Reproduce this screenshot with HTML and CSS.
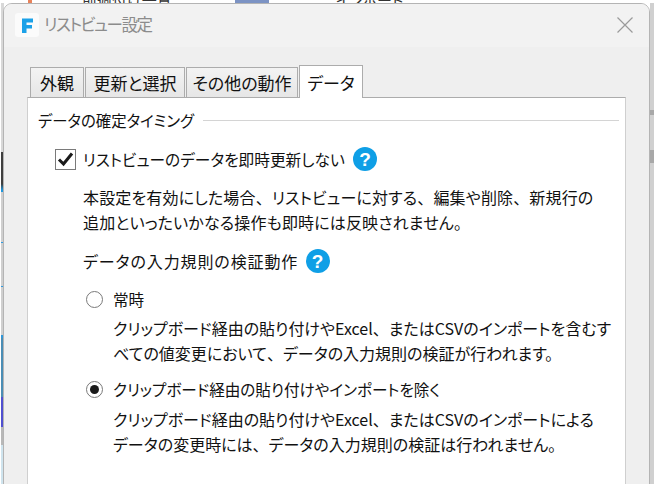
FILE: index.html
```html
<!DOCTYPE html>
<html lang="ja">
<head>
<meta charset="utf-8">
<title>リストビュー設定</title>
<link rel="stylesheet" href="styles.css">
</head>
<body>
<div class="backdrop">
  <span class="bg-text bg-text-a">前週付け一覧</span>
  <span class="bg-text bg-text-b">インポート</span>
  <span class="bg-swatch"></span>
  <span class="bg-orange"></span>
</div>
<section class="dialog">
  <header class="titlebar">
    <span class="app-icon">
      <svg width="24" height="24" viewBox="0 0 24 24"><rect width="24" height="24" rx="3" fill="#fbfbfb"/><path d="M7 5.500h11v4h-6.500v2.500h5.500v3.500h-5.500v4.500h-4.500z" fill="#1ba1e8"/></svg>
    </span>
    <span class="title">リストビュー設定</span>
    <svg class="close" width="16" height="16" viewBox="0 0 16 16"><path d="M.5.500l15 15M15.500.500l-15 15" stroke="#9a9a9a" stroke-width="1.200" fill="none"/></svg>
  </header>
  <div class="content">
    <nav class="tabs">
      <span class="tab tab-a">外観</span>
      <span class="tab tab-b">更新と選択</span>
      <span class="tab tab-c">その他の動作</span>
      <span class="tab tab-active">データ</span>
    </nav>
    <div class="panel">
      <div class="group-title"><span>データの確定タイミング</span><i class="rule"></i></div>
      <div class="option check-row">
        <span class="checkbox"><svg width="17" height="15" viewBox="0 0 17 15"><path d="M2 7.500l4.500 4.500 8.500-10.500" stroke="#1a1a1a" stroke-width="3" fill="none"/></svg></span>
        <span>リストビューのデータを即時更新しない</span>
        <svg class="help" width="24" height="24" viewBox="0 0 24 24"><circle cx="12" cy="12" r="12" fill="#0f9fe6"/><text x="12" y="18.500" text-anchor="middle" class="help-mark">?</text></svg>
      </div>
      <p class="desc desc-main">本設定を有効にした場合<b>、</b>リストビューに対する<b>、</b>編集や削除<b>、</b>新規行の<br>追加といったいかなる操作も即時には反映されません。</p>
      <div class="option sub-head">
        <span>データの入力規則の検証動作</span>
        <svg class="help" width="24" height="24" viewBox="0 0 24 24"><circle cx="12" cy="12" r="12" fill="#0f9fe6"/><text x="12" y="18.500" text-anchor="middle" class="help-mark">?</text></svg>
      </div>
      <div class="option radio-row first-radio"><span class="radio"></span><span>常時</span></div>
      <p class="desc desc-radio">クリップボード経由の貼り付けやExcel<b>、</b>またはCSVのインポートを含むす<br>べての値変更において<b>、</b>データの入力規則の検証が行われます。</p>
      <div class="option radio-row second-radio"><span class="radio radio-on"></span><span>クリップボード経由の貼り付けやインポートを除く</span></div>
      <p class="desc desc-radio desc-last">クリップボード経由の貼り付けやExcel<b>、</b>またはCSVのインポートによる<br>データの変更時には<b>、</b>データの入力規則の検証は行われません。</p>
    </div>
  </div>
</section>
</body>
</html>
```
FILE: styles.css
```css
* { box-sizing: border-box; }
html, body { margin: 0; height: 100%; }
body {
  width: 654px;
  height: 484px;
  overflow: hidden;
  position: relative;
  font-family: "Noto Sans CJK JP", "Noto Sans", sans-serif;
  font-size: 15.600px;
  color: #111;
  font-feature-settings: "palt";
  background: #fff;
}
b { font-weight: 400; font-feature-settings: normal; }
.backdrop {
  position: absolute;
  inset: 0;
  background:
    linear-gradient(#fff 0 0) 0 0 / 100% 3px no-repeat,
    linear-gradient(#fff, #fff) 0 0 / 1px 100% no-repeat,
    linear-gradient(to bottom,
      #d8d8d8 0 152px, #3f3f3f 152px 184px, #1e96dc 190px 192px, #cfcfcf 192px 242px,
      #2f9ae0 242px 243px, #cfcfcf 243px 286px, #2f9ae0 286px 287px, #cfcfcf 287px 335px,
      #2f96d8 335px 338px, #4a8db5 338px 397px, #5050d0 397px 427px, #b8b8b8 427px 445px,
      #cfe4ee 445px 484px) 1px 0 / 3px 100% no-repeat,
    linear-gradient(to bottom, #d0d0d0 0 110px, #a8a8a8 110px 115px, #d0d0d0 115px 150px, #a8a8a8 150px 163px, #d0d0d0 163px) 650px 0 / 4px 100% no-repeat;
}
.bg-text {
  position: absolute;
  top: -11px;
  font-size: 15px;
  color: #333;
}
.bg-text-a { left: 82px; }
.bg-text-b { left: 336px; }
.bg-swatch {
  position: absolute;
  left: 235px;
  top: 0;
  width: 34px;
  height: 3px;
  background: #7c93c4;
}
.bg-orange {
  position: absolute;
  left: 28px;
  top: 0;
  width: 4px;
  height: 3px;
  background: #e8825a;
}
.dialog {
  position: absolute;
  left: 3px;
  top: 3px;
  width: 647px;
  height: 490px;
  background: #efefef;
  border: 1px solid #b4b4b4;
  border-radius: 9px 9px 0 0;
}
.titlebar {
  height: 43px;
  background: #f2f2f2;
  border-radius: 8px 8px 0 0;
  display: flex;
  align-items: center;
  padding: 0 16px 0 11px;
}
.app-icon { display: flex; margin-top: -2px; }
.title {
  margin-left: 5px;
  margin-top: -3px;
  font-size: 16.500px;
  letter-spacing: -1.500px;
  color: #8c8c8c;
  flex: 1;
}
.close { margin-top: -1px; }
.content { padding: 17px 23px 0; }
.tabs {
  display: flex;
  align-items: flex-end;
  height: 33px;
  padding-left: 3px;
  position: relative;
  z-index: 1;
}
.tab {
  height: 30px;
  margin-right: 1px;
  display: flex;
  align-items: center;
  justify-content: center;
  background: linear-gradient(#f3f3f3, #e6e6e6);
  border: 1px solid #acacac;
  border-bottom: none;
  font-size: 17px;
  line-height: 1;
}
.tab-a { width: 54px; }
.tab-b { width: 100px; }
.tab-c { width: 112px; }
.tab-active {
  width: 64px;
  height: 33px;
  margin: 0 0 -1px 0;
  background: #fff;
}
.panel {
  height: 400px;
  background: #fff;
  border: 1px solid #cfcfcf;
  border-top-color: #acacac;
  padding: 12px 6px 0 10px;
}
.group-title {
  display: flex;
  align-items: center;
  gap: 9px;
  height: 22px;
  font-size: 15.400px;
  margin-top: -1px;
}
.rule { flex: 1; height: 1px; background: #d4d4d4; }
.option { display: flex; align-items: center; height: 24px; }
.check-row { margin: 16px 0 0 17px; font-size: 15.700px; }
.checkbox {
  width: 21px;
  height: 21px;
  border: 1px solid #7a7a7a;
  display: flex;
  align-items: center;
  justify-content: center;
  margin-right: 7px;
  background: #fff;
}
.help { margin-left: 8px; }
.help-mark {
  font-family: "Liberation Sans", sans-serif;
  font-size: 19px;
  font-weight: 700;
  fill: #fff;
}
.desc {
  margin: 0;
  line-height: 24.500px;
  font-size: 16px;
  letter-spacing: .15px;
  white-space: nowrap;
}
.desc-main { margin: 14px 0 0 45px; }
.sub-head { margin: 15px 0 0 45px; font-size: 16px; letter-spacing: .9px; }
.radio-row { margin-left: 48px; }
.first-radio { margin-top: 14px; }
.second-radio { margin-top: 12px; }
.radio {
  width: 17px;
  height: 17px;
  border: 1px solid #7a7a7a;
  border-radius: 50%;
  margin-right: 10px;
  display: flex;
  align-items: center;
  justify-content: center;
}
.radio-on { border-width: 1.500px; }
.radio-on::after {
  content: "";
  width: 9px;
  height: 9px;
  border-radius: 50%;
  background: #1a1a1a;
}
.desc-radio { margin: 5px 0 0 75px; letter-spacing: 0; }
.desc-last { margin-top: 6px; }
```
